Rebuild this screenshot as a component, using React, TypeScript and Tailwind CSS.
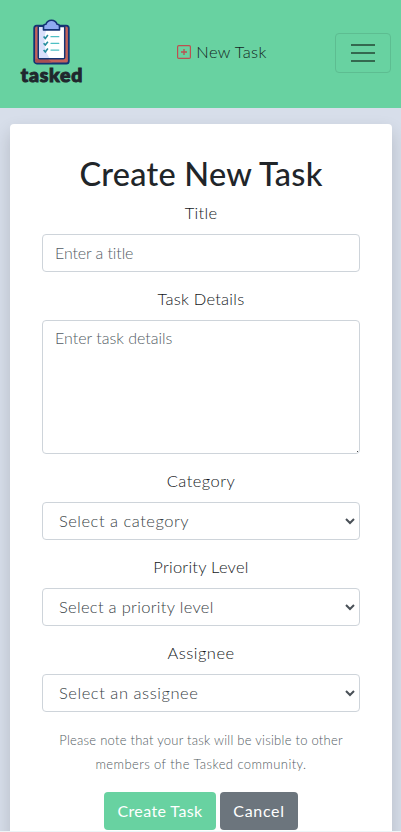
import type { ReactNode } from "react";

function Logo() {
  return (
    <div className="flex w-16 flex-col items-center">
      <svg width="38" height="46" viewBox="0 0 38 46" fill="none">
        <rect x="1.2" y="6.7" width="34.6" height="37.8" rx="2.6" fill="#c4625a" stroke="#133474" strokeWidth="1.8" />
        <path d="M14.500 39.800c1.500 1.500 3 2.600 4.600 3.800H2.800c-.6-1-.8-2-.8-3.800z" fill="#a94f52" />
        <path d="M5.300 7.500h26.400v30.900q0 1.400-1.400 1.400H6.700q-1.400 0-1.400-1.400z" fill="#fff" stroke="#133474" strokeWidth="1.5" />
        <path d="M6 8.200h8.500c-4 8-4.500 21 2 30.900H6.700L6 38.400z" fill="#d9e0fb" />
        <path d="M10.500 10.900V7.400c0-1.500 1-2.100 2.400-2.100C13.800 2.700 15.500 1.200 18.500 1.200s4.700 1.500 5.600 4.100c1.400 0 2.400.6 2.400 2.100v3.500z" fill="#8fabf0" stroke="#133474" strokeWidth="1.6" strokeLinejoin="round" />
        <path d="m10.600 17.500 1.700 1.900 2.600-3.300M10.600 24.200l1.700 1.900 2.600-3.300M10.600 31l1.700 1.900 2.600-3.300" stroke="#258d9e" strokeWidth="1.600" />
        <path d="M18 17.700h7.800M18 24.300h7.800M18 31.100h7.800" stroke="#4fc0c4" strokeWidth="1.300" strokeLinecap="round" />
      </svg>
      <span className="-mt-[2px] font-[Lato] text-[19.500px] leading-6 font-black tracking-[0.8px] text-[#20272d] [-webkit-text-stroke:1px_#20272d]">
        tasked
      </span>
    </div>
  );
}

function Field({ label, tracking, children }: { label: string; tracking: string; children: ReactNode }) {
  return (
    <div className="mb-4 flex flex-col">
      <label className={`mb-[10px] text-center text-[16.5px] leading-[22px] text-[#14181b] ${tracking}`}>{label}</label>
      {children}
    </div>
  );
}

function Select({ text, tracking }: { text: string; tracking: string }) {
  return (
    <button className="flex h-[38px] items-center justify-between rounded border border-[#ced4da] bg-white pr-[3px] pl-4 text-[16.5px] text-[#373e45]">
      <span className={tracking}>{text}</span>
      <svg width="12" height="8" viewBox="0 0 12 8" fill="none" stroke="#495057" strokeWidth="2">
        <path d="m2 2 4 4 4-4" />
      </svg>
    </button>
  );
}

export default function App() {
  return (
    <div className="flex h-[832px] w-[401px] flex-col overflow-hidden bg-[#d7deea] font-['Lato',sans-serif] text-base font-light">
      <header className="z-10 flex h-[108px] shrink-0 items-start justify-between bg-[#68d2a1] pr-[10px] pl-5">
        <div className="pt-[19px]">
          <Logo />
        </div>
        <div className="mt-10 flex items-center gap-[5px] pl-[25px] leading-6 text-[#14261f]">
          <svg width="14" height="14" viewBox="0 0 14 14" fill="none" stroke="#bd4f50">
            <rect x=".6" y=".6" width="12.800" height="12.800" rx="1.200" strokeWidth="1.200" />
            <path d="M7 4v6M4 7h6" strokeWidth="1.300" />
          </svg>
          <span className="text-[16.5px] tracking-[0.35px]">New Task</span>
        </div>
        <button className="mt-[33px] flex h-10 w-14 flex-col items-center justify-center gap-[6px] rounded border border-[#5dbd91]">
          <span className="h-[2px] w-6 bg-[#34694f]" />
          <span className="h-[2px] w-6 bg-[#34694f]" />
          <span className="h-[2px] w-6 bg-[#34694f]" />
        </button>
      </header>
      <main className="min-h-0 flex-1 overflow-hidden pt-4 pr-[9px] pl-[10px]">
        <section className="flex h-[760px] flex-col rounded bg-white px-8 pt-8 shadow-[0_8px_18px_rgba(0,0,0,0.16)]">
          <h1 className="mb-[10px] text-center text-[32.5px] leading-9 font-medium tracking-[0.25px] text-[#212529]">
            Create New Task
          </h1>
          <Field label="Title" tracking="tracking-[0.3px]">
            <input
              className="h-[38px] rounded border border-[#ced4da] px-3 pb-[2px] font-light tracking-[-0.1px] placeholder:text-[#535c64]"
              placeholder="Enter a title"
            />
          </Field>
          <Field label="Task Details" tracking="tracking-[0.25px]">
            <div className="relative flex">
              <textarea
                className="h-[134px] w-full resize-none rounded border border-[#ced4da] px-3 py-[5px] leading-6 font-light placeholder:text-[#535c64]"
                placeholder="Enter task details"
              />
              <span className="absolute right-[2px] bottom-[2px] size-px bg-[#444]" />
            </div>
          </Field>
          <Field label="Category" tracking="tracking-[0.45px]">
            <Select text="Select a category" tracking="tracking-[0.5px]" />
          </Field>
          <Field label="Priority Level" tracking="tracking-[0.25px]">
            <Select text="Select a priority level" tracking="tracking-[0.3px]" />
          </Field>
          <Field label="Assignee" tracking="tracking-[0.5px]">
            <Select text="Select an assignee" tracking="tracking-[0.55px]" />
          </Field>
          <p className="mb-4 text-center text-[13px] leading-6 text-[#535c64]">
            <span className="tracking-[0.25px]">Please note that your task will be visible to other</span>
            <br />
            <span className="tracking-[0.42px]">members of the Tasked community.</span>
          </p>
          <div className="flex justify-center gap-1 font-normal text-white">
            <button className="h-[38px] w-28 rounded bg-[#68d2a1] pb-px tracking-[0.4px]">Create Task</button>
            <button className="h-[38px] w-[78px] rounded bg-[#6c757d] pb-px tracking-[0.7px]">Cancel</button>
          </div>
        </section>
      </main>
      <div className="h-px shrink-0 bg-[#edf5f7]" />
    </div>
  );
}
